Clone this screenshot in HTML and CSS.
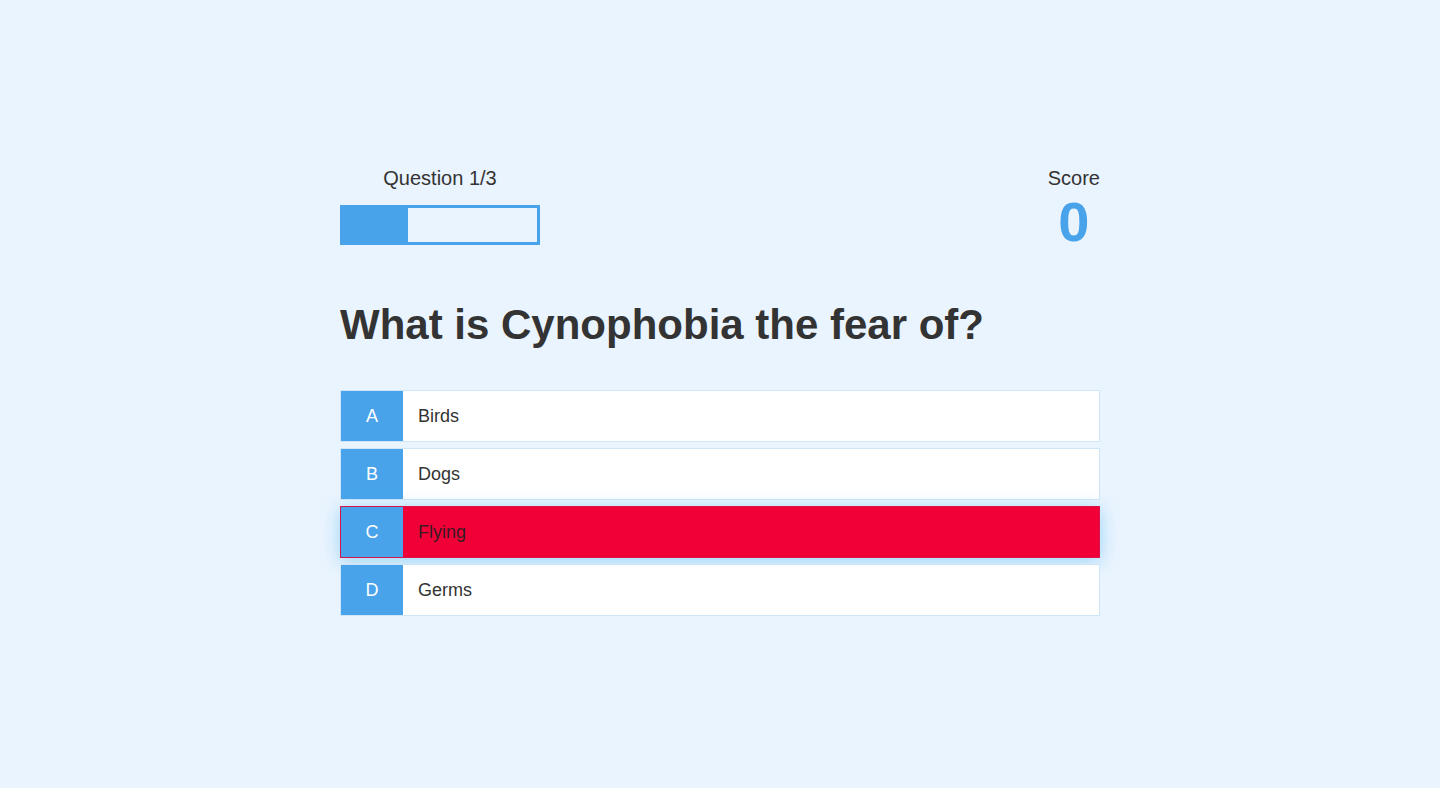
FILE: index.html
```html
<!DOCTYPE html>
<html lang="en">
<head>
<meta charset="utf-8">
<title>Quiz</title>
<link rel="stylesheet" href="styles.css">
</head>
<body>
<main class="quiz">
  <header class="hud">
    <div class="hud-item progress-block">
      <p class="hud-label">Question 1/3</p>
      <div class="progress"><div class="progress-fill" style="width: 33.3%"></div></div>
    </div>
    <div class="hud-item score-block">
      <p class="hud-label">Score</p>
      <p class="score">0</p>
    </div>
  </header>
  <h1 class="question">What is Cynophobia the fear of?</h1>
  <div class="choices">
    <div class="choice"><span class="choice-prefix">A</span><span class="choice-text">Birds</span></div>
    <div class="choice"><span class="choice-prefix">B</span><span class="choice-text">Dogs</span></div>
    <div class="choice incorrect"><span class="choice-prefix">C</span><span class="choice-text">Flying</span></div>
    <div class="choice"><span class="choice-prefix">D</span><span class="choice-text">Germs</span></div>
  </div>
</main>
</body>
</html>
```
FILE: styles.css
```css
* { box-sizing: border-box; }
html, body { margin: 0; padding: 0; }
body {
  background: #eaf4fe;
  font-family: "Liberation Sans", Arial, sans-serif;
  color: #333;
  min-height: 788px;
}
.quiz {
  width: 760px;
  margin: 0 auto;
  padding-top: 168px;
}
.hud {
  display: flex;
  justify-content: space-between;
  align-items: flex-start;
  height: 77px;
}
.hud-item { text-align: center; }
.progress-block { width: 200px; }
.hud-label {
  margin: 0;
  font-size: 20px;
  line-height: 20px;
}
.progress {
  margin-top: 17px;
  height: 40px;
  border: 3px solid #48a3ea;
  background: #eaf4fe;
}
.progress-fill {
  height: 100%;
  background: #48a3ea;
}
.score {
  margin: 2px 0 0;
  font-size: 56px;
  line-height: 64px;
  font-weight: bold;
  color: #48a3ea;
}
.question {
  margin: 55px 0 40px;
  font-size: 42px;
  line-height: 50px;
  font-weight: bold;
  color: #333;
}
.choices {
  display: flex;
  flex-direction: column;
  gap: 6px;
}
.choice {
  display: flex;
  align-items: stretch;
  height: 52px;
  background: #fff;
  border: 1px solid #cfe6f8;
  font-size: 18px;
}
.choice-prefix {
  width: 62px;
  display: flex;
  align-items: center;
  justify-content: center;
  background: #48a3ea;
  color: #fff;
}
.choice-text {
  display: flex;
  align-items: center;
  padding-left: 15px;
}
.choice.incorrect {
  background: #f00037;
  border-color: #d8154a;
  box-shadow: 0 3px 18px rgba(86, 185, 240, 0.55);
}
.choice.incorrect .choice-text { color: #3a1a24; }
```
